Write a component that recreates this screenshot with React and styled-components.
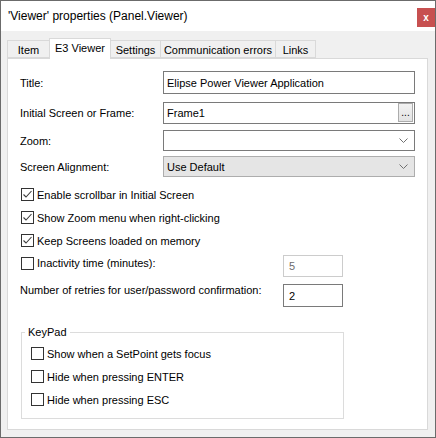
import React from 'react';
import styled, { createGlobalStyle } from 'styled-components';

const GlobalStyle = createGlobalStyle`
  html, body {
    margin: 0;
    padding: 0;
    background: #ffffff;
  }
  body {
    font-family: "Liberation Sans", Arial, sans-serif;
    font-size: 11px;
    color: #000;
  }
`;

const Window = styled.div`
  width: 436px;
  height: 438px;
  box-sizing: border-box;
  border: 1px solid #6b6b6b;
  background: #f0f0f0;
  display: flex;
  flex-direction: column;
`;

const TitleBar = styled.div`
  height: 30px;
  flex-shrink: 0;
  background: #fff;
  display: flex;
  justify-content: space-between;
  align-items: flex-start;
`;

const Caption = styled.div`
  font-size: 12px;
  line-height: 30px;
  padding-left: 7px;
`;

const CloseButton = styled.div`
  margin-top: 7px;
  width: 18px;
  height: 19px;
  background: #c75050;
  color: #fff;
  font-weight: bold;
  font-size: 10px;
  display: flex;
  align-items: center;
  justify-content: center;
`;

const Body = styled.div`
  flex: 1;
  display: flex;
  flex-direction: column;
  padding: 7px 7px 7px 6px;
  min-height: 0;
`;

const TabStrip = styled.div`
  display: flex;
  align-items: flex-end;
  height: 20px;
  padding-left: 1px;
`;

const Tab = styled.div`
  box-sizing: border-box;
  width: ${p => p.$w}px;
  height: ${p => (p.$active ? '21px' : '18px')};
  margin-bottom: ${p => (p.$active ? '-1px' : '0')};
  margin-left: -1px;
  padding-top: ${p => (p.$active ? '2px' : '2px')};
  border: 1px solid #d9d9d9;
  border-bottom: ${p => (p.$active ? 'none' : '1px solid #d9d9d9')};
  background: ${p => (p.$active ? '#fff' : '#f0f0f0')};
  position: relative;
  z-index: ${p => (p.$active ? 2 : 1)};
  text-align: center;
  white-space: nowrap;
  line-height: 14px;
`;

const Panel = styled.div`
  flex: 1;
  background: #fff;
  border: 1px solid #d9d9d9;
  padding: 12px 12px 0 12px;
  display: flex;
  flex-direction: column;
`;

const FieldRow = styled.div`
  display: flex;
  align-items: center;
  margin-top: ${p => p.$gap || 0}px;
`;

const Label = styled.div`
  width: 143px;
  flex-shrink: 0;
`;

const TextBox = styled.div`
  box-sizing: border-box;
  width: ${p => p.$w || 252}px;
  height: ${p => p.$h || 23}px;
  border: 1px solid ${p => (p.$disabled ? '#cccccc' : '#7a7a7a')};
  background: #fff;
  color: ${p => (p.$disabled ? '#6d6d6d' : '#000')};
  display: flex;
  align-items: center;
  padding-left: ${p => p.$pad || 3}px;
  padding-right: 1px;
`;

const BoxText = styled.span`
  flex: 1;
`;

const EllipsisButton = styled.div`
  box-sizing: border-box;
  width: 15px;
  height: 19px;
  margin-bottom: 1px;
  border: 1px solid #acacac;
  background: linear-gradient(#f2f2f2, #e3e3e3);
  font-size: 10px;
  display: flex;
  align-items: flex-end;
  justify-content: center;
  line-height: 12px;
  padding-bottom: 2px;
`;

const Combo = styled.div`
  box-sizing: border-box;
  width: 252px;
  height: 21px;
  border: 1px solid ${p => (p.$flat ? '#adadad' : '#7a7a7a')};
  background: ${p => (p.$flat ? '#e5e5e5' : '#fff')};
  display: flex;
  align-items: center;
  justify-content: space-between;
  padding: 0 6px 0 3px;
`;

const CheckRow = styled.div`
  display: flex;
  align-items: center;
  height: 23px;
  padding-left: 1px;
  gap: 3px;
  white-space: nowrap;
`;

const Box = styled.span`
  box-sizing: border-box;
  width: 13px;
  height: 13px;
  border: 1px solid #333;
  background: #fff;
  display: flex;
  flex-shrink: 0;
`;

const SplitRow = styled.div`
  display: flex;
  align-items: flex-start;
  margin-top: ${p => p.$gap || 0}px;
`;

const LeftSlot = styled.div`
  width: 263px;
  flex-shrink: 0;
  line-height: 13px;
`;

const Offset = styled.div`
  margin-top: ${p => p.$top || 0}px;
`;

const Group = styled.fieldset`
  margin: 19px 0 0 1px;
  width: 323px;
  box-sizing: border-box;
  border: 1px solid #dcdcdc;
  padding: 3px 0 7px 8px;
`;

const Legend = styled.legend`
  padding: 0 3px;
  margin-left: -5px;
  line-height: 13px;
`;

function Chevron() {
  return (
    <svg width="9" height="5" viewBox="0 0 9 5">
      <polyline points="0.5,0.5 4.5,4.5 8.5,0.5" fill="none" stroke="#707070" strokeWidth="1" />
    </svg>
  );
}

function CheckBox({ checked, children }) {
  return (
    <CheckRow>
      <Box>
        {checked && (
          <svg width="11" height="11" viewBox="0 0 11 11">
            <polyline points="1.5,5.5 4,8 9.5,2" fill="none" stroke="#3c3c3c" strokeWidth="1.1" />
          </svg>
        )}
      </Box>
      {children}
    </CheckRow>
  );
}

const tabs = [
  { label: 'Item', w: 43 },
  { label: 'E3 Viewer', w: 62, active: true },
  { label: 'Settings', w: 51 },
  { label: 'Communication errors', w: 116 },
  { label: 'Links', w: 41 },
];

export default function App() {
  return (
    <>
      <GlobalStyle />
      <Window>
        <TitleBar>
          <Caption>'Viewer' properties (Panel.Viewer)</Caption>
          <CloseButton>x</CloseButton>
        </TitleBar>
        <Body>
          <TabStrip>
            {tabs.map(t => (
              <Tab key={t.label} $w={t.w} $active={t.active}>{t.label}</Tab>
            ))}
          </TabStrip>
          <Panel>
            <FieldRow>
              <Label>Title:</Label>
              <TextBox>Elipse Power Viewer Application</TextBox>
            </FieldRow>
            <FieldRow $gap={8}>
              <Label>Initial Screen or Frame:</Label>
              <TextBox $h={22}>
                <BoxText>Frame1</BoxText>
                <EllipsisButton>...</EllipsisButton>
              </TextBox>
            </FieldRow>
            <FieldRow $gap={6}>
              <Label>Zoom:</Label>
              <Combo>
                <span />
                <Chevron />
              </Combo>
            </FieldRow>
            <FieldRow $gap={5}>
              <Label>Screen Alignment:</Label>
              <Combo $flat>
                <span>Use Default</span>
                <Chevron />
              </Combo>
            </FieldRow>

            <Offset $top={6}>
              <CheckBox checked>Enable scrollbar in Initial Screen</CheckBox>
              <CheckBox checked>Show Zoom menu when right-clicking</CheckBox>
              <CheckBox checked>Keep Screens loaded on memory</CheckBox>
            </Offset>

            <SplitRow>
              <LeftSlot>
                <CheckBox>Inactivity time (minutes):</CheckBox>
              </LeftSlot>
              <Offset $top={3}>
                <TextBox $w={60} $h={22} $pad={5} $disabled>5</TextBox>
              </Offset>
            </SplitRow>

            <SplitRow $gap={7}>
              <LeftSlot>Number of retries for user/password confirmation:</LeftSlot>
              <TextBox $w={60} $pad={5}>2</TextBox>
            </SplitRow>

            <Group>
              <Legend>KeyPad</Legend>
              <CheckBox>Show when a SetPoint gets focus</CheckBox>
              <CheckBox>Hide when pressing ENTER</CheckBox>
              <CheckBox>Hide when pressing ESC</CheckBox>
            </Group>
          </Panel>
        </Body>
      </Window>
    </>
  );
}
